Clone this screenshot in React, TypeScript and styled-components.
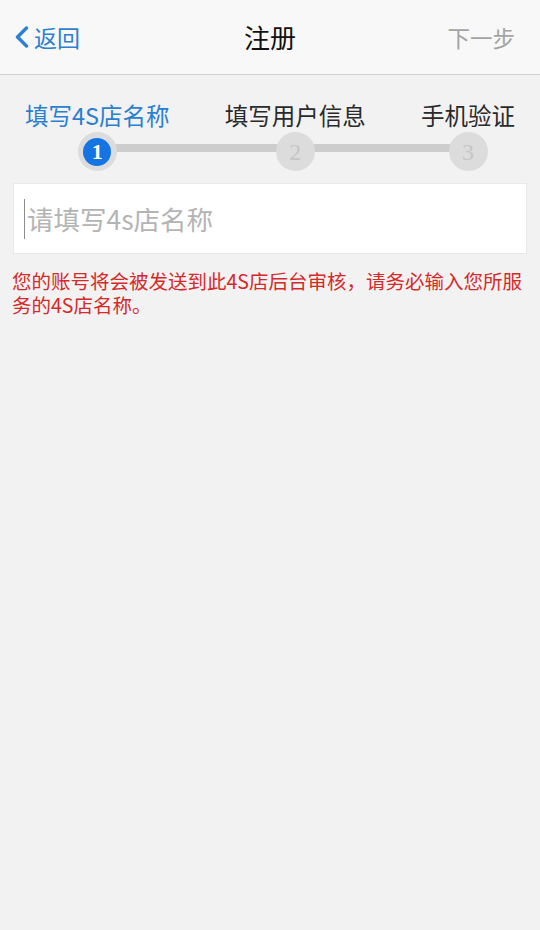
import React from "react";
import styled, { createGlobalStyle } from "styled-components";

const GlobalStyle = createGlobalStyle`
  html, body {
    margin: 0;
    padding: 0;
    background: #f2f2f2;
  }
  body {
    font-family: "Noto Sans CJK SC", "Noto Sans", sans-serif;
  }
  * { box-sizing: border-box; }
`;

const Page = styled.div`
  width: 540px;
  min-height: 930px;
  background: #f2f2f2;
  display: flex;
  flex-direction: column;
`;

const NavBar = styled.header`
  height: 75px;
  background: #f8f8f8;
  border-bottom: 1px solid #cfcfcf;
  display: grid;
  grid-template-columns: 1fr auto 1fr;
  align-items: center;
  padding: 0 25px;
`;

const BackButton = styled.button`
  justify-self: start;
  margin-left: -10px;
  display: flex;
  align-items: center;
  gap: 5px;
  background: none;
  border: none;
  padding: 0;
  color: #2c7fd3;
  font-family: inherit;
  font-size: 23px;
  line-height: 30px;
  cursor: pointer;
`;

const Title = styled.h1`
  margin: 0;
  font-size: 26px;
  font-weight: 400;
  color: #111;
  line-height: 30px;
`;

const NextButton = styled.button`
  justify-self: end;
  background: none;
  border: none;
  padding: 0;
  color: #a3a3a3;
  font-family: inherit;
  font-size: 22.5px;
  line-height: 30px;
`;

const Steps = styled.div`
  position: relative;
  display: flex;
  justify-content: space-between;
  padding: 26px 25px 0;
`;

const Track = styled.div`
  position: absolute;
  left: 98px;
  right: 72px;
  top: 69px;
  height: 8px;
  background: #cdcdcd;
`;

const Step = styled.div`
  display: flex;
  flex-direction: column;
  align-items: center;
  gap: 3px;
  position: relative;
  z-index: 1;
`;

const StepLabel = styled.div<{ $active?: boolean }>`
  font-size: 23.5px;
  line-height: 28px;
  color: ${(p) => (p.$active ? "#2a7fd0" : "#2a2a2a")};
  white-space: nowrap;
`;

const StepCircle = styled.div`
  width: 39px;
  height: 39px;
  border-radius: 50%;
  background: #dcdcdc;
  display: flex;
  align-items: center;
  justify-content: center;
`;

const StepNumber = styled.span<{ $active?: boolean }>`
  width: 28px;
  height: 28px;
  border-radius: 50%;
  display: flex;
  align-items: center;
  justify-content: center;
  background: ${(p) => (p.$active ? "#1474e4" : "transparent")};
  color: ${(p) => (p.$active ? "#ffffff" : "#c6c6c6")};
  font-family: "Liberation Serif", "DejaVu Serif", serif;
  font-size: ${(p) => (p.$active ? "22px" : "24px")};
  font-weight: ${(p) => (p.$active ? 700 : 400)};
  line-height: 1;
`;

const InputBox = styled.label`
  margin: 12px 13px 0;
  height: 71px;
  background: #ffffff;
  border: 1px solid #e9e9e9;
  display: flex;
  align-items: center;
  padding-left: 10px;
`;

const Caret = styled.span`
  width: 1px;
  height: 40px;
  background: #8c8c8c;
  margin-right: 2px;
`;

const NameInput = styled.input`
  flex: 1;
  border: none;
  outline: none;
  background: transparent;
  padding: 0;
  font-family: "Noto Sans CJK SC", "Noto Sans", sans-serif;
  font-size: 26.5px;
  color: #333;
  &::placeholder {
    color: #b4b4b4;
  }
`;

const Notice = styled.p`
  margin: 15px 0 0;
  padding: 0 12px;
  color: #d52a2a;
  font-size: 19.5px;
  font-weight: 400;
  line-height: 24px;
`;

const steps = ["填写4S店名称", "填写用户信息", "手机验证"];

export default function App() {
  return (
    <>
      <GlobalStyle />
      <Page>
        <NavBar>
          <BackButton>
            <svg width="14" height="22" viewBox="0 0 14 22" fill="none">
              <polyline
                points="11.5,2 2.5,11 11.5,20"
                stroke="#2c7fd3"
                strokeWidth="3.4"
                strokeLinecap="round"
                strokeLinejoin="round"
              />
            </svg>
            返回
          </BackButton>
          <Title>注册</Title>
          <NextButton>下一步</NextButton>
        </NavBar>
        <Steps>
          <Track />
          {steps.map((label, i) => (
            <Step key={label}>
              <StepLabel $active={i === 0}>{label}</StepLabel>
              <StepCircle>
                <StepNumber $active={i === 0}>{i + 1}</StepNumber>
              </StepCircle>
            </Step>
          ))}
        </Steps>
        <InputBox>
          <Caret />
          <NameInput placeholder="请填写4s店名称" />
        </InputBox>
        <Notice>
          您的账号将会被发送到此4S店后台审核，请务必输入您所服务的4S店名称。
        </Notice>
      </Page>
    </>
  );
}
